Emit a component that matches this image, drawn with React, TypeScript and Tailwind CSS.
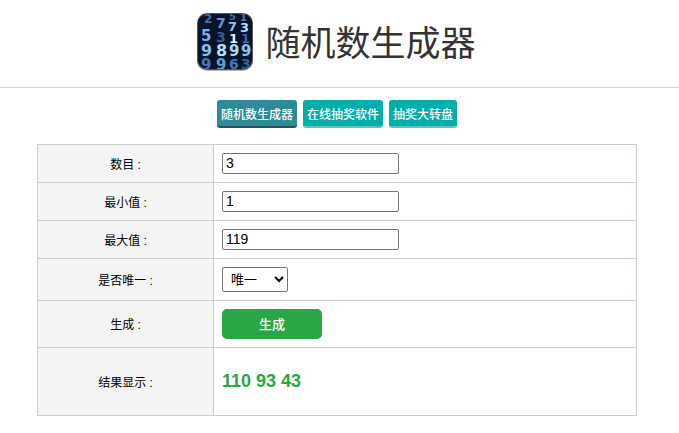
import React, { useState } from 'react';

const tools = [
  { name: '随机数生成器', active: true },
  { name: '在线抽奖软件', active: false },
  { name: '抽奖大转盘', active: false },
];

// Digits on the logo: value, x, baseline, size, colour
const digits: [string, number, number, number, string][] = [
  ['2', 7, 10, 12, '#3f6fae'], ['5', 32, 7, 10, '#3b6ba8'], ['1', 43, 8, 10, '#4a7cb8'],
  ['7', 19, 15, 14, '#5a9be0'], ['7', 31, 18, 13, '#8cc4f8'], ['3', 43, 19, 13, '#b4dcff'],
  ['5', 4, 28, 15, '#6fb2ee'], ['3', 19, 29, 14, '#2f5c9c'], ['1', 32, 30, 13, '#e4f4ff'], ['1', 44, 30, 13, '#3768aa'],
  ['9', 4, 43, 16, '#7cc0f6'], ['8', 19, 43, 16, '#b0defc'], ['9', 32, 43, 15, '#a4d6fc'], ['9', 44, 43, 15, '#86c0f2'],
  ['9', 4, 57, 15, '#3c78bc'], ['9', 19, 57, 15, '#5a9cdc'], ['6', 32, 56, 14, '#3f78bc'], ['3', 44, 56, 14, '#34609c'],
];

function Logo() {
  return (
    <svg width="56" height="64" viewBox="0 -1 56 64" aria-hidden="true">
      <defs>
        <clipPath id="logo-clip"><rect x="1" y="1" width="54" height="55" rx="9" /></clipPath>
      </defs>
      <rect x="0" y="1" width="56" height="57" rx="10" fill="#b5b5b5" />
      <rect x="0" y="0" width="56" height="57" rx="10" fill="#55585e" />
      <g clipPath="url(#logo-clip)">
        <rect x="0" y="0" width="56" height="58" fill="#0a1426" />
        {digits.map(([d, x, y, size, color], i) => (
          <text key={i} x={x} y={y} fontSize={size} fill={color} fontWeight="bold" fontFamily="'DejaVu Sans', sans-serif">{d}</text>
        ))}
      </g>
    </svg>
  );
}

function Row({ label, id, height, children }: { label: string; id: string; height: string; children: React.ReactNode }) {
  return (
    <tr className={height}>
      <th scope="row" className="w-44 border border-[#c5d1c9] bg-[#f4f4f4] px-2 pt-2 pb-1.5 text-center align-middle text-xs font-normal">
        <label htmlFor={id}>{label} :</label>
      </th>
      <td className="border border-[#c5d1c9] px-2 py-0 align-middle">{children}</td>
    </tr>
  );
}

export default function App() {
  const [count, setCount] = useState('3');
  const [min, setMin] = useState('1');
  const [max, setMax] = useState('119');
  const [unique, setUnique] = useState('yes');
  const [result, setResult] = useState([110, 93, 43]);

  const generate = () => {
    const lo = Number(min);
    const hi = Number(max);
    const total = unique === 'yes' ? Math.min(Number(count), hi - lo + 1) : Number(count);
    const list: number[] = [];
    while (list.length < total) {
      const n = Math.floor(Math.random() * (hi - lo + 1)) + lo;
      if (unique === 'no' || !list.includes(n)) list.push(n);
    }
    setResult(list);
  };

  const field = 'block h-[21px] w-[177px] rounded-xs border border-[#767676] bg-white px-[3px] pb-0.5 text-sm leading-4';

  return (
    <div className="bg-white font-['Liberation_Sans','Noto_Sans_CJK_SC',sans-serif] text-black">
      <header className="flex h-[88px] items-center justify-center gap-3 border-b border-[#d8d8d8] pr-1.5">
        <Logo />
        <h1 className="text-[35px] leading-[52px] text-[#333]">随机数生成器</h1>
      </header>

      <main className="pr-[5px]">
        <nav className="flex justify-center gap-1.5 pt-3">
          {tools.map(t => (
            <a
              key={t.name}
              href="#"
              className={`h-7 rounded-[3px] border-b-2 px-1 pt-px text-xs leading-7 font-medium text-white ${t.active ? 'border-[#1d5560] bg-[#2f8a98]' : 'border-[#5cc4c0] bg-[#00aeaa]'}`}
            >
              {t.name}
            </a>
          ))}
        </nav>

        <table className="mx-auto mt-4 w-full max-w-[600px] border-collapse">
          <tbody>
            <Row label="数目" id="count" height="h-[38px]">
              <input id="count" type="text" className={field} value={count} onChange={e => setCount(e.target.value)} />
            </Row>
            <Row label="最小值" id="min" height="h-[38px]">
              <input id="min" type="text" className={field} value={min} onChange={e => setMin(e.target.value)} />
            </Row>
            <Row label="最大值" id="max" height="h-[38px]">
              <input id="max" type="text" className={field} value={max} onChange={e => setMax(e.target.value)} />
            </Row>
            <Row label="是否唯一" id="unique" height="h-[42px]">
              <select
                id="unique"
                className="block h-[25px] w-[66px] rounded-xs border border-[#767676] bg-white pl-1 text-[13px]"
                value={unique}
                onChange={e => setUnique(e.target.value)}
              >
                <option value="yes">唯一</option>
                <option value="no">不唯一</option>
              </select>
            </Row>
            <Row label="生成" id="generate" height="h-[47px]">
              <button id="generate" type="button" onClick={generate} className="block h-[30px] w-[100px] rounded-[5px] bg-[#28a745] pt-px text-[13px] font-medium text-white">
                生成
              </button>
            </Row>
            <Row label="结果显示" id="result" height="h-[68px]">
              <output id="result" className="block pb-0.5 text-lg font-bold text-[#28a745]">{result.join(' ')}</output>
            </Row>
          </tbody>
        </table>
      </main>
    </div>
  );
}
